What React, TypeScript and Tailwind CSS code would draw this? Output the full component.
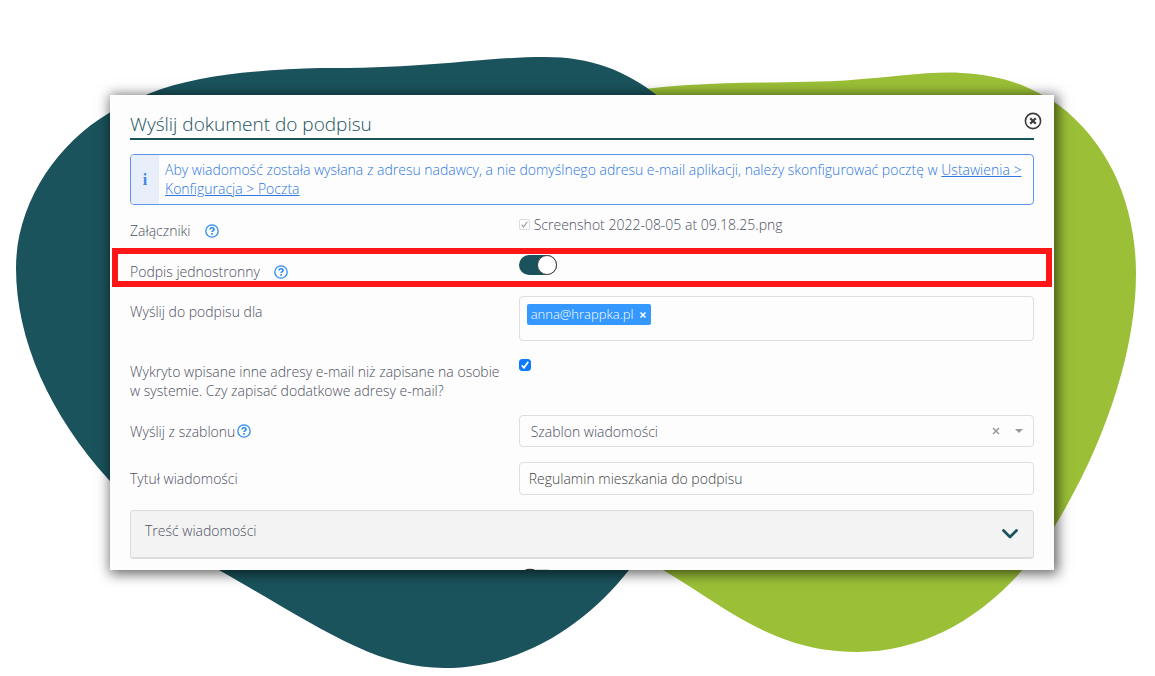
import { useState } from 'react'
import type { ReactNode } from 'react'

const ATTACHMENT = 'Screenshot 2022-08-05 at 09.18.25.png'

function Backdrop() {
  return (
    <svg
      className="absolute inset-0 h-full w-full"
      viewBox="0 0 1155 676"
      preserveAspectRatio="none"
      aria-hidden="true"
    >
      <path
        fill="#9bc037"
        d="M600 96C690 78 780 85 851 80C895 77 930 71 962 73C1000 75 1030 85 1060 106C1110 145 1136 205 1136 274C1136 350 1105 445 1053 529C1005 605 935 652 857 652C775 652 730 610 663 570C600 500 560 380 560 260Z"
      />
      <path
        fill="#1a535c"
        d="M148 94C200 73 265 70 320 68C430 69 480 57 545 57C590 57 625 70 658 96C720 150 735 250 735 330C720 430 680 510 629 570C585 626 520 668 444 668C375 668 320 628 219 570C180 544 145 520 109 480C50 415 16 340 16 268C16 205 55 145 109 113Z"
      />
    </svg>
  )
}

function HelpIcon() {
  return (
    <button type="button" aria-label="Pomoc" className="flex">
      <svg className="h-3.5 w-3.5" viewBox="0 0 14 14" fill="none" stroke="#2a8cf0" aria-hidden="true">
        <circle cx="7" cy="7" r="6.2" strokeWidth="1.3" />
        <path d="M5 5.5C5.1 4.3 6 3.8 7 3.8C8.2 3.8 9 4.5 9 5.4C9 6.7 7.1 6.7 7.1 8.1" strokeWidth="1.6" />
        <path d="M7.1 9.1V10.7" strokeWidth="1.6" />
      </svg>
    </button>
  )
}

interface RowProps {
  label: string
  htmlFor?: string
  help?: ReactNode
  className?: string
  labelClassName?: string
  children: ReactNode
}

function Row({ label, htmlFor, help, className = '', labelClassName = '', children }: RowProps) {
  return (
    <div className={`grid grid-cols-[43%_57%] ${className}`}>
      <div className={`flex items-center ${labelClassName}`}>
        <label htmlFor={htmlFor}>{label}</label>
        {help}
      </div>
      <div>{children}</div>
    </div>
  )
}

export default function App() {
  const [oneSided, setOneSided] = useState(true)
  const [saveEmails, setSaveEmails] = useState(true)
  const [title, setTitle] = useState('Regulamin mieszkania do podpisu')

  return (
    <div className="relative min-h-screen overflow-hidden bg-white pt-[95px] pr-[101px] pb-[106px] pl-[110px] font-['Open_Sans',sans-serif] text-sm leading-[19px] font-light text-[#4d5061]">
      <Backdrop />

      <section
        aria-labelledby="dialog-title"
        className="relative bg-[#fdfdfd] px-5 pt-[15px] shadow-[2px_2px_12px_2px_rgba(0,0,0,0.6)]"
      >
        {/* Header */}
        <header className="flex items-start justify-between border-b-2 border-[#1a535c]">
          <h1 id="dialog-title" className="text-[19px] leading-7 text-[#1a535c]">
            Wyślij dokument do podpisu
          </h1>
          <button type="button" aria-label="Zamknij" className="-mr-2 pt-0.5">
            <svg className="h-[18px] w-[18px]" viewBox="0 0 18 18" fill="none" stroke="#3c3c3c" aria-hidden="true">
              <circle cx="9" cy="9" r="7.6" strokeWidth="1.6" />
              <path d="M6.2 6.2L11.8 11.8M11.8 6.2L6.2 11.8" strokeWidth="2.2" />
            </svg>
          </button>
        </header>

        {/* Info */}
        <div className="mt-3.5 flex overflow-hidden rounded border border-[#5b94e8] text-[#2f78e0]">
          <div className="flex w-7 shrink-0 items-center justify-center bg-[#e8effb] font-['Liberation_Serif',serif] text-base font-bold text-[#4285e4]">
            i
          </div>
          <p className="px-1.5 pt-[5px] pb-1.5">
            Aby wiadomość została wysłana z adresu nadawcy, a nie domyślnego adresu e-mail aplikacji, należy
            skonfigurować pocztę w{' '}
            <a href="#poczta" className="underline">
              Ustawienia &gt; Konfiguracja &gt; Poczta
            </a>
          </p>
        </div>

        <Row
          label="Załączniki"
          htmlFor="attachment"
          className="pt-2.5"
          labelClassName="gap-3.5 pt-1.5"
          help={<HelpIcon />}
        >
          <label className="flex items-center gap-1">
            <span className="grid">
              <input
                id="attachment"
                type="checkbox"
                checked
                disabled
                className="col-start-1 row-start-1 h-[11px] w-[11px] appearance-none rounded-xs border border-[#dcdcdc] bg-white"
              />
              <svg className="col-start-1 row-start-1 h-[11px] w-[11px]" viewBox="0 0 12 12" fill="none" stroke="#a5a5a5" strokeWidth="1.4" aria-hidden="true">
                <path d="M3 6.3L5 8.6L9 3.2" />
              </svg>
            </span>
            {ATTACHMENT}
          </label>
        </Row>

        {/* Highlighted option */}
        <Row
          label="Podpis jednostronny"
          htmlFor="one-sided"
          className="-mx-[18px] mt-2 h-[39px] border-[6px] border-[#ff1616] px-3"
          labelClassName="gap-3.5 pt-2"
          help={<HelpIcon />}
        >
          <span className="flex pt-px">
            <input
              id="one-sided"
              type="checkbox"
              role="switch"
              checked={oneSided}
              onChange={(e) => setOneSided(e.target.checked)}
              className="flex h-5 w-[38px] appearance-none rounded-full bg-[#9a9a9a] before:h-5 before:w-5 before:rounded-full before:border before:border-[#444] before:bg-white checked:justify-end checked:bg-[#1a535c]"
            />
          </span>
        </Row>

        <Row label="Wyślij do podpisu dla" htmlFor="recipient" className="mt-[9px]" labelClassName="self-start pt-1.5">
          <div className="flex h-[45px] items-start rounded border border-[#dedede] p-[7px]">
            <span className="flex items-center gap-1.5 rounded-xs bg-[#3498fe] px-1 py-px text-[13px] text-white">
              anna@hrappka.pl
              <button type="button" aria-label="Usuń anna@hrappka.pl">
                <svg className="h-2 w-2" viewBox="0 0 8 8" stroke="currentColor" strokeWidth="1.5" aria-hidden="true">
                  <path d="M1.5 1.5L6.5 6.5M6.5 1.5L1.5 6.5" />
                </svg>
              </button>
            </span>
            <input id="recipient" type="email" className="min-w-0 flex-1 px-1 outline-none" />
          </div>
        </Row>

        <Row
          label="Wykryto wpisane inne adresy e-mail niż zapisane na osobie w systemie. Czy zapisać dodatkowe adresy e-mail?"
          htmlFor="save-emails"
          className="mt-[18px]"
          labelClassName="pt-[3px] pr-3.5"
        >
          <span className="flex">
            <span className="grid">
              <input
                id="save-emails"
                type="checkbox"
                checked={saveEmails}
                onChange={(e) => setSaveEmails(e.target.checked)}
                className="peer col-start-1 row-start-1 h-3 w-3 appearance-none rounded-[3px] border border-[#999] checked:border-[#0a7aff] checked:bg-[#0a7aff]"
              />
              <svg className="pointer-events-none invisible col-start-1 row-start-1 h-3 w-3 peer-checked:visible" viewBox="0 0 12 12" fill="none" stroke="white" strokeWidth="1.8" aria-hidden="true">
                <path d="M2.8 6.3L5 8.8L9.2 2.8" />
              </svg>
            </span>
          </span>
        </Row>

        <Row
          label="Wyślij z szablonu"
          htmlFor="template"
          className="mt-[15px]"
          labelClassName="gap-0.5"
          help={<HelpIcon />}
        >
          <div className="flex h-8 items-center rounded border border-[#dedede] pr-2.5">
            <select id="template" className="h-full min-w-0 flex-1 appearance-none pl-[11px] outline-none">
              <option>Szablon wiadomości</option>
            </select>
            <button type="button" aria-label="Wyczyść" className="mr-[15px]">
              <svg className="h-2 w-2" viewBox="0 0 8 8" stroke="#999" strokeWidth="1.5" aria-hidden="true">
                <path d="M1 1L7 7M7 1L1 7" />
              </svg>
            </button>
            <svg className="h-1 w-2" viewBox="0 0 8 4" fill="#999" aria-hidden="true">
              <path d="M0 0H8L4 4Z" />
            </svg>
          </div>
        </Row>

        <Row label="Tytuł wiadomości" htmlFor="subject" className="mt-[15px]">
          <input
            id="subject"
            value={title}
            onChange={(e) => setTitle(e.target.value)}
            className="block h-[33px] w-full rounded border border-[#dedede] px-[9px] text-[#444] outline-none"
          />
        </Row>

        {/* Message body, collapsed */}
        <button
          type="button"
          aria-expanded="false"
          className="mt-[15px] flex h-[49px] w-full items-center justify-between rounded border border-b-2 border-[#dcdcdc] bg-[#f3f3f3] pr-3.5 pl-3.5"
        >
          <span className="pb-2">Treść wiadomości</span>
          <svg className="h-3 w-[18px]" viewBox="0 0 18 12" fill="none" stroke="#1a535c" strokeWidth="2.8" strokeLinecap="round" strokeLinejoin="round" aria-hidden="true">
            <path d="M2.5 2.5L9 9L15.5 2.5" />
          </svg>
        </button>

        {/* Top edge of the next switch, cut off by the window */}
        <div className="flex h-[11px] items-end pl-[43%]">
          <svg className="h-0.5 w-8" viewBox="0 0 32 2" aria-hidden="true">
            <ellipse cx="11" cy="2.5" rx="5" ry="1.7" fill="#333" />
            <path d="M16 1.6H30V2H16Z" fill="#999" />
          </svg>
        </div>
      </section>
    </div>
  )
}
